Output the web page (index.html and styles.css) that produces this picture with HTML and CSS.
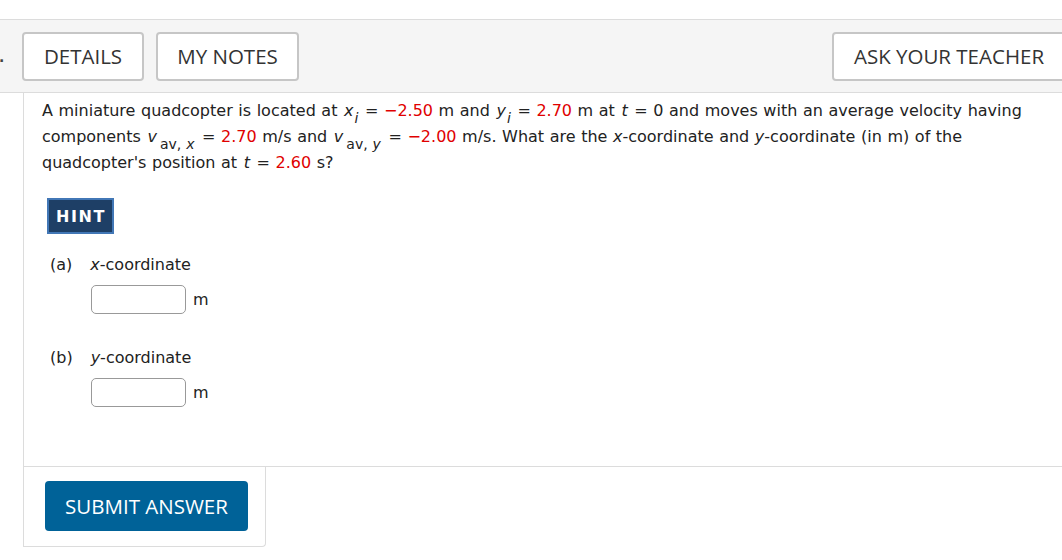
FILE: index.html
```html
<!DOCTYPE html>
<html>
<head>
<meta charset="utf-8">
<link rel="stylesheet" href="styles.css">
</head>
<body>
<div class="page">
  <div class="header">
    <span class="qnum">.</span>
    <button class="hbtn details">DETAILS</button>
    <button class="hbtn notes">MY NOTES</button>
    <span class="spacer"></span>
    <button class="hbtn ask">ASK YOUR TEACHER</button>
  </div>
  <div class="content">
    <div class="question">
      <p class="stem">A miniature quadcopter is located at <i class="v">x</i><sub><i>i</i></sub> = <span class="red">&minus;2.50</span> m and <i class="v">y</i><sub><i>i</i></sub> = <span class="red">2.70</span> m at <i class="v">t</i> = 0 and moves with an average velocity having components <i class="v">v</i><sub class="w">av, <i>x</i></sub> = <span class="red">2.70</span> m/s and <i class="v">v</i><sub class="w">av, <i>y</i></sub> = <span class="red">&minus;2.00</span> m/s. What are the <i>x</i>-coordinate and <i>y</i>-coordinate (in m) of the quadcopter's position at <i class="v">t</i> = <span class="red">2.60</span> s?</p>
      <button class="hint">HINT</button>
      <div class="part">
        <div class="plabel"><span class="pl">(a)</span><span><i>x</i>-coordinate</span></div>
        <div class="answer"><span class="box"></span><span class="unit">m</span></div>
      </div>
      <div class="part partb">
        <div class="plabel"><span class="pl">(b)</span><span><i>y</i>-coordinate</span></div>
        <div class="answer"><span class="box"></span><span class="unit">m</span></div>
      </div>
    </div>
    <div class="submitrow">
      <div class="submitbox">
        <button class="submit">SUBMIT ANSWER</button>
      </div>
    </div>
  </div>
</div>
</body>
</html>
```

FILE: styles.css
```css
html, body {
  margin: 0;
  padding: 0;
  background: #fff;
}
.page {
  padding-top: 19px;
  width: 1062px;
  overflow: hidden;
}
.header {
  display: flex;
  align-items: center;
  height: 72px;
  background: #f5f5f5;
  border-top: 1px solid #dcdcdc;
  border-bottom: 1px solid #dcdcdc;
}
.qnum {
  display: block;
  width: 22px;
  font-family: "DejaVu Sans", sans-serif;
  font-size: 14px;
  font-weight: bold;
  color: #444;
  margin-left: 0;
  margin-top: 2px;
  text-indent: -1px;
}
.hbtn {
  font-family: "Open Sans", sans-serif;
  font-size: 20.5px;
  font-weight: 500;
  color: #333;
  background: #fff;
  border: 2px solid #c6c6c6;
  border-radius: 4px;
  height: 49px;
  padding: 0;
  margin: 0;
}
.details { margin-right: 12px; width: 122px; }
.notes { width: 143px; }
.spacer { flex: 1; }
.ask { width: 234px; margin-right: -4px; }
.content {
  margin-left: 23px;
  border-left: 1px solid #dcdcdc;
}
.question {
  padding: 5px 0 0 18px;
  font-family: "DejaVu Sans", Verdana, sans-serif;
  font-size: 16px;
  color: #222;
  height: 368px;
}
.stem {
  margin: 0;
  line-height: 26px;
  width: 1015px;
  word-spacing: 0.5px;
}
.stem .v {
  padding: 0 1px;
}
.stem sub {
  font-size: 14px;
  vertical-align: -7px;
  line-height: 0;
  padding-right: 1px;
}
.stem sub.w {
  padding: 0 2px 0 2px;
}
.red { color: #e00000; }
.hint {
  display: block;
  margin-top: 22px;
  margin-left: 5px;
  background: #1e3f66;
  border: 2px solid #4277b6;
  color: #fff;
  font-family: "DejaVu Sans", Verdana, sans-serif;
  font-weight: bold;
  font-size: 16px;
  letter-spacing: 1.6px;
  height: 36px;
  width: 67px;
  padding: 0 0 0 1px;
}
.part {
  margin-left: 8px;
}
.plabel {
  display: flex;
  gap: 18px;
  margin-top: 20px;
  line-height: 22px;
}
.partb .plabel { margin-top: 33px; }
.answer {
  display: flex;
  align-items: center;
  margin-left: 41px;
  margin-top: 9px;
}
.box {
  display: inline-block;
  width: 93px;
  height: 27px;
  border: 1px solid #999;
  border-radius: 5px;
  background: #fff;
}
.unit {
  margin-left: 7px;
}
.submitrow {
  border-top: 1px solid #dcdcdc;
}
.submitbox {
  width: 241px;
  height: 65px;
  padding-top: 14px;
  border-right: 1px solid #dcdcdc;
  border-bottom: 1px solid #dcdcdc;
  border-bottom-right-radius: 4px;
}
.submit {
  display: block;
  margin: 0 0 0 21px;
  background: #006298;
  color: #fff;
  border: none;
  border-radius: 4px;
  width: 203px;
  height: 50px;
  font-family: "Open Sans", sans-serif;
  font-size: 20.5px;
  font-weight: 500;
  padding: 0;
}
```
